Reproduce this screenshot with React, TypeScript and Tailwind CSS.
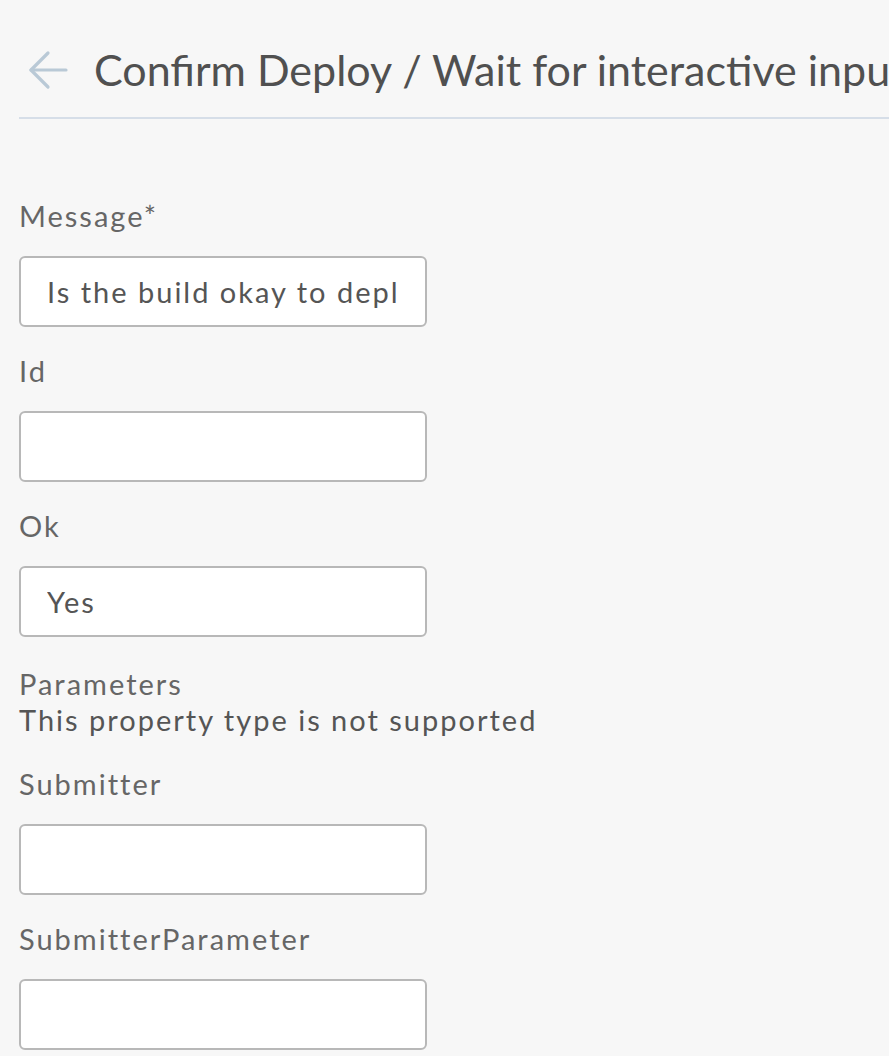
import React from "react";

type Field = { label: string; value?: string; note?: string };

const fields: Field[] = [
  { label: "Message*", value: "Is the build okay to deploy?" },
  { label: "Id", value: "" },
  { label: "Ok", value: "Yes" },
  { label: "Parameters", note: "This property type is not supported" },
  { label: "Submitter", value: "" },
  { label: "SubmitterParameter", value: "" },
];

const BackArrow = () => (
  <svg width="40" height="40" viewBox="0 0 40 40" fill="none" stroke="#b9c9d6" strokeWidth="3.2" strokeLinecap="round" strokeLinejoin="round">
    <path d="M38 20H3" />
    <path d="M20 3L3 20l17 17" />
  </svg>
);

const App = () => {
  return (
    <div className="w-[889px] h-[1056px] overflow-hidden bg-[#f7f7f7] font-['Lato','Noto_Sans',sans-serif] text-[#5a5a5a]">
      <div className="pl-[19px]">
        <div className="flex items-center h-[119px] pt-[22px] border-b-2 border-[#d6dee8] whitespace-nowrap">
          <div className="ml-[9px] mr-[26px] shrink-0">
            <BackArrow />
          </div>
          <span className="text-[43px] leading-[50px] text-[#505050]">Confirm Deploy / Wait for interactive input</span>
        </div>

        <div className="pt-[79px] flex flex-col">
          {fields.map((f) => (
            <div key={f.label} className={f.note ? "flex flex-col pt-[3px]" : "flex flex-col"}>
              <label className="text-[29px] leading-[36px] tracking-[2px] text-[#666]">{f.label}</label>
              {f.note ? (
                <div className="text-[29px] leading-[36px] tracking-[2px] text-[#555] mb-[28px]">{f.note}</div>
              ) : (
                <input
                  readOnly
                  value={f.value}
                  className="mt-[22px] mb-[26px] w-[408px] h-[71px] bg-white border-2 border-[#b8b8b8] rounded-[6px] pl-[26px] pr-[26px] text-[29px] tracking-[2px] text-[#555] outline-none"
                />
              )}
            </div>
          ))}
        </div>
      </div>
    </div>
  );
};

export default App;
